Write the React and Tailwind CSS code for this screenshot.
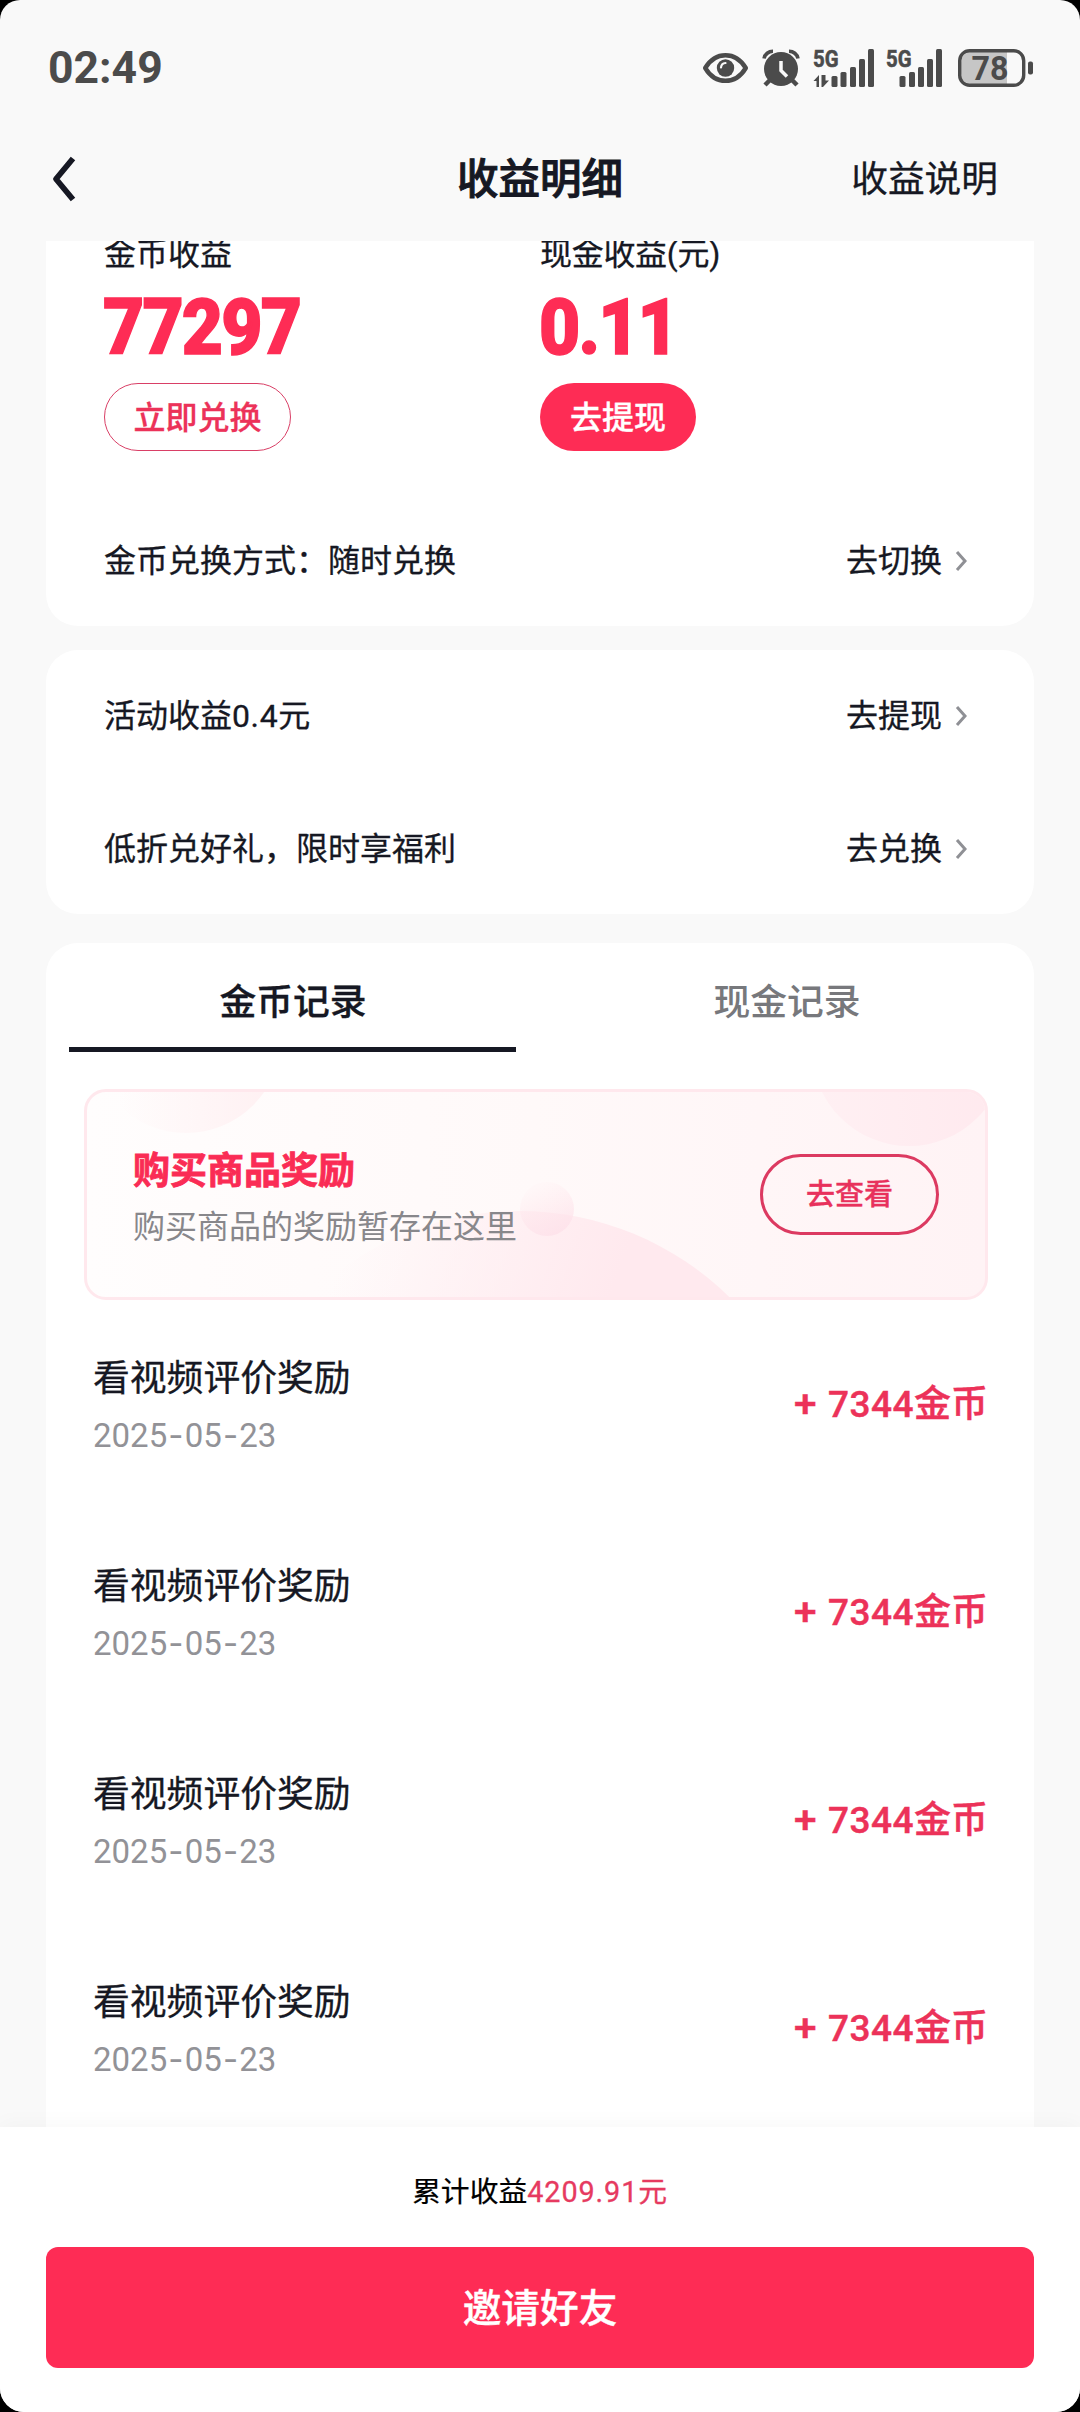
const ROWS = [1, 2, 3, 4];

function EyeIcon() {
  return (
    <svg className="block" width="45" height="30" viewBox="0 0 45 30" fill="none">
      <path d="M2.200 15C7 7 14 2.200 22.500 2.200S38 7 42.800 15C38 23 31 27.800 22.500 27.800S7 23 2.200 15Z" stroke="#4b4b4b" strokeWidth="4.400" strokeLinejoin="round" />
      <circle cx="22.500" cy="15" r="8.700" fill="#4b4b4b" />
      <path d="M18 14.500a5 5 0 0 1 4.500-4.500" stroke="#f9f9f9" strokeWidth="2.200" strokeLinecap="round" />
    </svg>
  );
}

function AlarmIcon() {
  return (
    <svg className="block" width="38" height="38" viewBox="0 0 38 38" fill="none">
      <path d="M2 9.500A9 9 0 0 1 11 2.300M36 9.500A9 9 0 0 0 27 2.300" stroke="#4b4b4b" strokeWidth="3.600" />
      <circle cx="19" cy="20" r="17" fill="#4b4b4b" />
      <path d="M8 31l-5 5M30 31l5 5" stroke="#4b4b4b" strokeWidth="4.500" />
      <path d="M19 12v9.500l6 6" stroke="#f9f9f9" strokeWidth="3.500" />
    </svg>
  );
}

function Signal({ data }) {
  return (
    <svg className="block overflow-visible" width="62" height="38" viewBox="0 0 62 38" fill="#4b4b4b">
      <text x="0" y="18" fontFamily="Roboto, sans-serif" fontWeight="700" fontSize="24.500" textLength="25.500" lengthAdjust="spacingAndGlyphs" stroke="#4b4b4b" strokeWidth="0.600">5G</text>
      {data && <path d="M0.500 32 6 26v12H3.500v-6ZM8.500 26v12h1.500l6-6.500h-3.500V26Z" />}
      <rect x={data ? 18.500 : 13.500} y="27" width="6" height="11" rx="1.500" />
      <rect x={data ? 27.500 : 23} y="23" width="6" height="15" rx="1.500" />
      <rect x={data ? 37 : 32} y="18" width="6" height="20" rx="1.500" />
      <rect x={data ? 46 : 41} y="10" width="6" height="28" rx="1.500" />
      <rect x={data ? 55 : 50} y="0" width="6" height="38" rx="1.500" />
    </svg>
  );
}

function BatteryIcon() {
  return (
    <svg className="block" width="76" height="38" viewBox="0 0 76 38">
      <path d="M49 3H13A10 10 0 0 0 3 13v12a10 10 0 0 0 10 10h36Z" fill="#c6c6c6" />
      <rect x="1.700" y="1.700" width="64" height="34.600" rx="10" fill="none" stroke="#4b4b4b" strokeWidth="3.400" />
      <rect x="70" y="12.500" width="5" height="13" rx="2" fill="#4b4b4b" />
      <text x="13.500" y="31" fontFamily="Roboto, sans-serif" fontWeight="700" fontSize="34" textLength="37" lengthAdjust="spacingAndGlyphs" fill="#4b4b4b">78</text>
    </svg>
  );
}

function LinkRow({ label, action, className }) {
  return (
    <div className={"flex items-center justify-between pl-[58px] pr-[67px] text-[32px] [-webkit-text-stroke:0.3px_#161823] " + className}>
      <span>{label}</span>
      <span className="flex items-center">
        {action}
        <svg className="ml-[13px]" width="12" height="22" viewBox="0 0 12 22" fill="none">
          <path d="M2 2 10 11 2 20" stroke="#8f9095" strokeWidth="3" />
        </svg>
      </span>
    </div>
  );
}

function RewardBanner() {
  return (
    <div className="relative ml-[38px] mt-[37px] flex h-[211px] w-[904px] items-center justify-between overflow-hidden rounded-[22px] border-[3px] border-[#ffe8ed] bg-gradient-to-r from-[#fffdfd] via-[#fff9f9] to-[#fff3f5] pl-[46px] pr-[46px]">
      <svg className="absolute left-[-3px] top-[-3px]" width="904" height="211" viewBox="0 0 904 211">
        <defs>
          <linearGradient id="topLeft" x1="0" x2="1">
            <stop offset="0.150" stopColor="#fff0f2" stopOpacity="0" />
            <stop offset="1" stopColor="#fff0f2" />
          </linearGradient>
          <linearGradient id="topRight" x1="0" x2="1">
            <stop offset="0" stopColor="#fff0f3" />
            <stop offset="1" stopColor="#ffe9ee" />
          </linearGradient>
          <linearGradient id="hill" gradientUnits="userSpaceOnUse" x1="290" y1="80" x2="540" y2="170">
            <stop offset="0" stopColor="#ffe9ee" stopOpacity="0" />
            <stop offset="1" stopColor="#ffe9ee" />
          </linearGradient>
          <linearGradient id="bubble" x1="0.300" y1="0.100" x2="0.700" y2="1">
            <stop offset="0" stopColor="#ffe4ea" stopOpacity="0.100" />
            <stop offset="1" stopColor="#fde0e9" stopOpacity="0.800" />
          </linearGradient>
        </defs>
        <circle cx="102" cy="-51" r="95" fill="url(#topLeft)" />
        <circle cx="825" cy="-40" r="97" fill="url(#topRight)" />
        <circle cx="435" cy="422" r="300" fill="url(#hill)" />
        <circle cx="463" cy="120" r="27" fill="url(#bubble)" />
      </svg>
      <div className="relative top-[4px]">
        <div className="text-[37px] font-bold leading-[56px] text-[#fa2c55] [-webkit-text-stroke:0.8px_#fa2c55]">购买商品奖励</div>
        <div className="text-[32px] leading-[54px] text-[#88878b]">购买商品的奖励暂存在这里</div>
      </div>
      <div className="relative flex h-[81px] w-[179px] items-center justify-center rounded-full border-[3px] border-[#dc3a61] pt-[3px] text-[29px] font-medium text-[#e8315c] [-webkit-text-stroke:0.3px_#e8315c]">
        去查看
      </div>
    </div>
  );
}

function Dash() {
  return <span className="inline-block w-[17.500px] text-center font-['Inter']">-</span>;
}

function RecordRow() {
  return (
    <div className="flex h-[208px] items-start justify-between pl-[47px] pr-[46px]">
      <div>
        <div className="pt-[3px] text-[36.800px] leading-[56px] [-webkit-text-stroke:0.3px_#161823]">看视频评价奖励</div>
        <div className="-mt-[1px] text-[33px] leading-[58px] text-[#929297]">
          2025<Dash />05<Dash />23
        </div>
      </div>
      <div className="mt-[28px] whitespace-pre text-[37px] font-medium leading-[58px] text-[#ec3259] [word-spacing:2px] [-webkit-text-stroke:0.4px_#ec3259]"><span className="inline-block origin-right scale-x-110">+</span> <span className="tracking-[0.500px]">7344</span>金币</div>
    </div>
  );
}

function Amount({ children }) {
  return (
    <div className="-ml-[1px] mt-[10px] origin-left scale-x-[0.925] text-[77px] font-black leading-[80px] tracking-[-2px] text-[#fe2c55] [-webkit-text-stroke:1.5px_#fe2c55]">
      {children}
    </div>
  );
}

export default function App() {
  return (
    <div className="h-[2412px] w-[1080px] bg-black">
      <div className="flex h-full flex-col overflow-hidden rounded-t-[20px] rounded-b-[24px] bg-[#f9f9f9] font-['Roboto','Noto_Sans_CJK_SC',sans-serif] text-[#161823]">
        <div className="flex h-[136px] shrink-0 items-center pl-[48px] pr-[46px]">
          <span className="pt-[1px] text-[44.500px] font-bold leading-none text-[#4b4b4b]">02:49</span>
          <div className="ml-auto flex items-center">
            <EyeIcon />
            <div className="ml-[14px]"><AlarmIcon /></div>
            <div className="ml-[13px]"><Signal data /></div>
            <div className="ml-[11px]"><Signal /></div>
            <div className="ml-[10px]"><BatteryIcon /></div>
          </div>
        </div>

        <div className="grid h-[105px] shrink-0 grid-cols-[1fr_240px_1fr] items-start">
          <svg className="ml-[52px] mt-[19px]" width="26" height="48" viewBox="0 0 26 48" fill="none">
            <path d="M21 3.500 4 24 21 44.500" stroke="#161823" strokeWidth="5.800" strokeLinejoin="round" />
          </svg>
          <div className="mt-[14px] text-center text-[41.500px] font-medium leading-[60px] [-webkit-text-stroke:1px_#161823]">收益明细</div>
          <div className="mr-[82px] mt-[14px] text-right text-[36.700px] leading-[60px] [-webkit-text-stroke:0.3px_#161823]">收益说明</div>
        </div>

        <div className="flex min-h-0 flex-1 flex-col overflow-hidden px-[46px]">
          <div className="h-[385px] shrink-0 rounded-b-[32px] bg-white">
            <div className="grid grid-cols-[436px_1fr] pl-[58px]">
              <div className="flex flex-col items-start">
                <div className="-mt-[11px] text-[32px] leading-[48px] [-webkit-text-stroke:0.3px_#161823]">金币收益</div>
                <Amount>77297</Amount>
                <div className="mt-[15px] flex h-[68px] w-[187px] items-center justify-center rounded-full border border-[#d93f66] pt-[1px] text-[32px] font-medium text-[#ec3259] [-webkit-text-stroke:0.3px_#ec3259]">立即兑换</div>
              </div>
              <div className="flex flex-col items-start">
                <div className="-mt-[11px] text-[32px] leading-[48px] tracking-[-0.3px] [-webkit-text-stroke:0.3px_#161823]">现金收益(元)</div>
                <Amount>0.11</Amount>
                <div className="mt-[15px] flex h-[68px] w-[156px] items-center justify-center rounded-full bg-[#fe2c55] pt-[1px] text-[32px] font-medium text-white [-webkit-text-stroke:0.3px_#fff]">去提现</div>
              </div>
            </div>
            <LinkRow label="金币兑换方式：随时兑换" action="去切换" className="mt-[76px] h-[68px]" />
          </div>

          <div className="mt-[24px] h-[264px] shrink-0 rounded-[32px] bg-white">
            <LinkRow label={<>活动收益<span className="tracking-[0.6px]">0.4</span>元</>} action="去提现" className="h-[132px]" />
            <LinkRow label="低折兑好礼，限时享福利" action="去兑换" className="h-[134px]" />
          </div>

          <div className="mt-[29px] flex-1 rounded-t-[32px] bg-white">
            <div className="grid h-[109px] grid-cols-2 text-[36.800px] font-medium">
              <div className="flex flex-col items-center justify-between">
                <span className="mt-[31px] leading-[58px] [-webkit-text-stroke:0.3px_#161823]">金币记录</span>
                <span className="mr-[1px] h-[5px] w-[447px] bg-[#161823]" />
              </div>
              <div className="flex flex-col items-center text-[#77787c]">
                <span className="mt-[31px] leading-[58px]">现金记录</span>
              </div>
            </div>
            <RewardBanner />
            <div className="mt-[48px]">
              {ROWS.map((id) => <RecordRow key={id} />)}
            </div>
          </div>
        </div>

        <div className="relative h-[285px] shrink-0 bg-white px-[46px] shadow-[0_-3px_20px_rgba(0,0,0,0.03)]">
          <div className="pt-[40px] text-center text-[28.800px] leading-[50px] text-black [-webkit-text-stroke:0.2px_#000]">
            累计收益<span className="tracking-[0.900px] text-[#e63a60] [-webkit-text-stroke:0.3px_#e63a60]">4209.91元</span>
          </div>
          <div className="mt-[30px] flex h-[121px] items-center justify-center rounded-[12px] bg-[#fe2c55] pt-[3px] text-[38.700px] font-medium text-white [-webkit-text-stroke:0.4px_#fff]">邀请好友</div>
        </div>
      </div>
    </div>
  );
}
